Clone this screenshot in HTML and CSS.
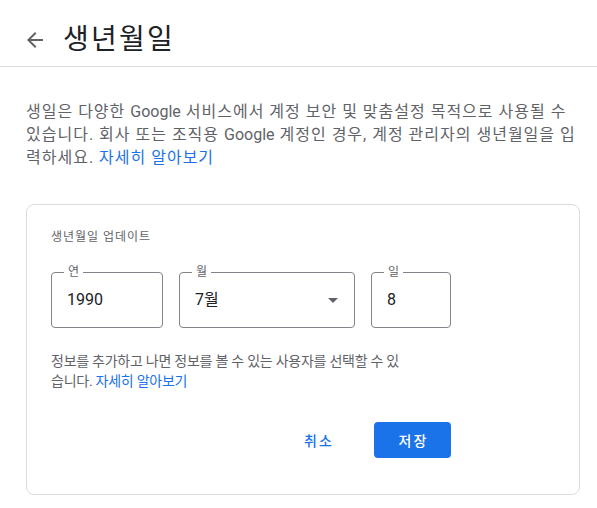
FILE: index.html
```html
<!DOCTYPE html>
<html lang="ko">
<head>
<meta charset="utf-8">
<title>생년월일</title>
<link rel="stylesheet" href="styles.css">
</head>
<body>
<header class="header">
  <svg class="back" viewBox="0 0 24 24" width="24" height="24"><path d="M20 11H7.83l5.59-5.59L12 4l-8 8 8 8 1.41-1.41L7.83 13H20v-2z"/></svg>
  <h1 class="title">생년월일</h1>
</header>
<main class="page">
  <p class="intro">생일은 다양한 <span class="en">Google</span> 서비스에서 계정 보안 및 맞춤설정 목적으로 사용될 수 있습니다. 회사 또는 조직용 <span class="en">Google</span> 계정인 경우, 계정 관리자의 생년월일을 입력하세요. <a class="link" href="#">자세히 알아보기</a></p>
  <section class="card">
    <div class="card-title">생년월일 업데이트</div>
    <div class="fields">
      <div class="field field-year">
        <span class="label">연</span>
        <span class="value">1990</span>
      </div>
      <div class="field field-month">
        <span class="label">월</span>
        <span class="value">7월</span>
        <svg class="drop" viewBox="0 0 24 24" width="24" height="24"><path d="M7 10l5 5 5-5z"/></svg>
      </div>
      <div class="field field-day">
        <span class="label">일</span>
        <span class="value">8</span>
      </div>
    </div>
    <p class="helper">정보를 추가하고 나면 정보를 볼 수 있는 사용자를 선택할 수 있습니다. <a class="link" href="#">자세히 알아보기</a></p>
    <div class="actions">
      <button class="btn btn-text">취소</button>
      <button class="btn btn-primary">저장</button>
    </div>
  </section>
</main>
</body>
</html>
```
FILE: styles.css
```css
* { box-sizing: border-box; }
body {
  margin: 0;
  background: #fff;
  font-family: Roboto, "Noto Sans CJK KR", "Noto Sans", sans-serif;
  color: #202124;
}
.header {
  display: flex;
  align-items: center;
  gap: 16px;
  padding: 22px 0 8px 23px;
  border-bottom: 1px solid #dadce0;
}
.back { fill: #5f6368; flex: none; }
.title {
  margin: 0;
  font-size: 28px;
  line-height: 36px;
  font-weight: 400;
  letter-spacing: 0.08em;
  color: #202124;
}
.page {
  padding: 0 17px 0 26px;
}
.intro {
  margin: 33px 0 0;
  font-size: 16px;
  line-height: 23px;
  letter-spacing: 1px;
  color: #5f6368;
}
.en { letter-spacing: 0; }
.link { color: #1a73e8; text-decoration: none; }
.card {
  margin-top: 35px;
  border: 1px solid #dadce0;
  border-radius: 8px;
  padding: 24px 24px 36px;
}
.card-title {
  font-size: 12px;
  line-height: 16px;
  letter-spacing: 0.08em;
  color: #5f6368;
}
.fields {
  display: flex;
  gap: 16px;
  margin-top: 27px;
}
.field {
  position: relative;
  height: 56px;
  border: 1px solid #80868b;
  border-radius: 4px;
  display: flex;
  align-items: center;
  padding: 0 15px;
}
.field-year { width: 112px; }
.field-month { width: 176px; justify-content: space-between; padding-right: 9px; }
.field-day { width: 80px; }
.label {
  position: absolute;
  top: -9px;
  left: 12px;
  padding: 0 4px;
  background: #fff;
  font-size: 12px;
  line-height: 16px;
  color: #5f6368;
}
.value {
  font-size: 16px;
  line-height: 24px;
  color: #202124;
}
.drop { fill: #5f6368; flex: none; }
.helper {
  margin: 23px 0 0;
  max-width: 360px;
  font-size: 14px;
  line-height: 20px;
  letter-spacing: -0.25px;
  color: #5f6368;
}
.actions {
  display: flex;
  justify-content: flex-end;
  gap: 22px;
  margin-top: 31px;
  width: 400px;
}
.btn {
  height: 36px;
  border: none;
  border-radius: 4px;
  font-family: inherit;
  font-size: 14px;
  font-weight: 500;
  letter-spacing: 0.15em;
  cursor: pointer;
}
.btn-text {
  background: transparent;
  color: #1a73e8;
  padding: 0 18px;
}
.btn-primary {
  width: 77px;
  padding: 0 0 0 2px;
  background: #1a73e8;
  color: #fff;
}
```
